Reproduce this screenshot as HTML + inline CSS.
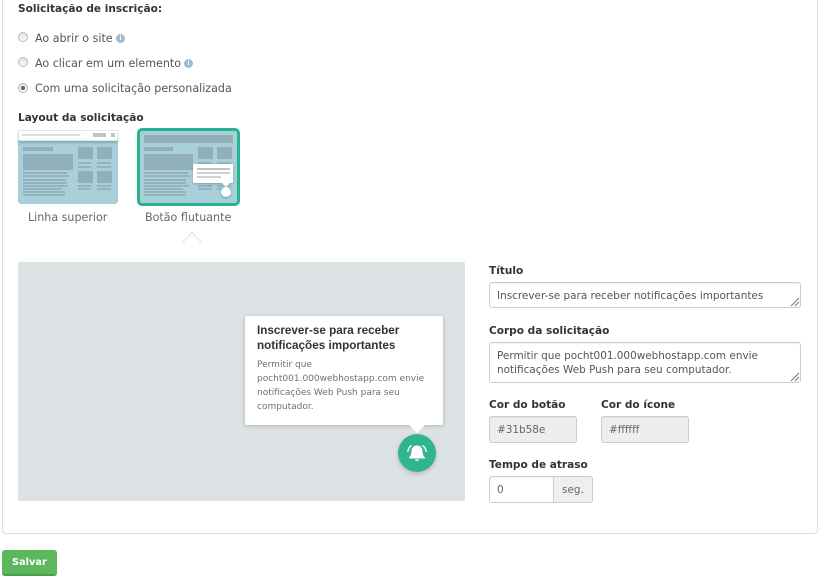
<!DOCTYPE html>
<html><head><meta charset="utf-8"><style>
html,body{margin:0;padding:0;background:#fff}
#p{position:relative;width:818px;height:583px;overflow:hidden;background:#fff;font-family:"DejaVu Sans","Liberation Sans",sans-serif;font-size:11.1px;color:#555}
#p *{box-sizing:border-box}
.a{position:absolute}
.t{position:absolute;white-space:nowrap;line-height:14px}
.b{font-weight:bold;color:#333;font-size:10.55px}
.in{position:absolute;border:1px solid #ccc;border-radius:3px;background:#fff;box-shadow:inset 0 1px 1px rgba(0,0,0,.05)}
.dis{background:#eee}
.radio{position:absolute;width:10px;height:10px;border-radius:50%;border:1px solid #bbb;background:linear-gradient(#e2e2e2,#f8f8f8);left:18px}
.i{position:absolute;width:9px;height:9px;border-radius:50%;background:#9dbccf;color:#fff;font:bold 7px/9px "Liberation Serif",serif;text-align:center}
.th{background:#a9cfda;position:absolute}
.r{position:absolute;background:#91b0ba}
.l{position:absolute;background:#93b3bd;height:2px}
.f{font-size:10.45px}
</style></head><body><div id="p">
<div class="a" style="left:2px;top:-10px;width:816px;height:544px;border:1px solid #ddd;border-radius:4px"></div>

<div class="t b" style="left:18px;top:2px">Solicitação de inscrição:</div>
<div class="radio" style="top:32px"></div>
<div class="t" style="left:35px;top:32px">Ao abrir o site</div>
<div class="i" style="left:116px;top:34px">i</div>
<div class="radio" style="top:57px"></div>
<div class="t" style="left:35px;top:57px">Ao clicar em um elemento</div>
<div class="i" style="left:184px;top:59px">i</div>
<div class="radio" style="top:83px"></div>
<div class="a" style="left:21px;top:86px;width:4px;height:4px;border-radius:50%;background:#666"></div>
<div class="t" style="left:35px;top:82px">Com uma solicitação personalizada</div>
<div class="t b" style="left:18px;top:111px">Layout da solicitação</div>

<!-- thumb 1 -->
<div class="th" style="left:18px;top:130px;width:100px;height:74px;border-radius:3px"></div>
<div class="a" style="left:18px;top:130px;width:100px;height:11px;background:#fff;border:1px solid #dfe9ec;border-radius:2px;box-shadow:0 2px 2px rgba(60,90,100,.3)"></div>
<div class="a" style="left:22px;top:134px;width:58px;height:2px;background:#ddd"></div>
<div class="a" style="left:93px;top:133px;width:13px;height:4px;background:#c4c4c4"></div>
<div class="a" style="left:111px;top:133px;width:4px;height:4px;background:#c4c4c4"></div>
<div class="r" style="left:23px;top:147px;width:30px;height:4px"></div>
<div class="r" style="left:23px;top:154px;width:50px;height:16px"></div>
<div class="l" style="left:23px;top:172px;width:44px"></div>
<div class="l" style="left:23px;top:175px;width:46px"></div>
<div class="l" style="left:23px;top:179px;width:43px"></div>
<div class="l" style="left:23px;top:182px;width:44px"></div>
<div class="l" style="left:23px;top:185px;width:45px"></div>
<div class="l" style="left:23px;top:188px;width:39px"></div>
<div class="l" style="left:23px;top:191px;width:42px"></div>
<div class="l" style="left:23px;top:194px;width:42px"></div>
<div class="r" style="left:78px;top:147px;width:15px;height:12px"></div>
<div class="r" style="left:97px;top:147px;width:15px;height:12px"></div>
<div class="l" style="left:78px;top:162px;width:13px"></div><div class="l" style="left:97px;top:162px;width:14px"></div>
<div class="l" style="left:78px;top:166px;width:13px"></div><div class="l" style="left:97px;top:166px;width:14px"></div>
<div class="r" style="left:78px;top:171px;width:15px;height:12px"></div>
<div class="r" style="left:97px;top:171px;width:15px;height:12px"></div>
<div class="l" style="left:78px;top:185px;width:13px"></div><div class="l" style="left:97px;top:185px;width:14px"></div>
<div class="l" style="left:78px;top:188px;width:13px"></div><div class="l" style="left:97px;top:188px;width:14px"></div>
<div class="t" style="left:28px;top:211px;color:#666">Linha superior</div>

<!-- thumb 2 -->
<div class="th" style="left:137px;top:128px;width:103px;height:78px;border:3px solid #26b48e;border-radius:5px"></div>
<div class="r" style="left:144px;top:135px;width:89px;height:8px"></div>
<div class="r" style="left:144px;top:147px;width:29px;height:4px"></div>
<div class="r" style="left:144px;top:154px;width:49px;height:16px"></div>
<div class="l" style="left:144px;top:172px;width:44px"></div>
<div class="l" style="left:144px;top:175px;width:46px"></div>
<div class="l" style="left:144px;top:179px;width:42px"></div>
<div class="l" style="left:144px;top:182px;width:42px"></div>
<div class="l" style="left:144px;top:185px;width:45px"></div>
<div class="l" style="left:144px;top:188px;width:39px"></div>
<div class="l" style="left:144px;top:191px;width:42px"></div>
<div class="l" style="left:144px;top:194px;width:42px"></div>
<div class="r" style="left:198px;top:147px;width:15px;height:12px"></div>
<div class="r" style="left:217px;top:147px;width:15px;height:12px"></div>
<div class="l" style="left:198px;top:162px;width:14px"></div><div class="l" style="left:217px;top:162px;width:14px"></div>
<div class="l" style="left:198px;top:185px;width:14px"></div><div class="l" style="left:217px;top:185px;width:14px"></div>
<div class="l" style="left:198px;top:188px;width:14px"></div><div class="l" style="left:217px;top:188px;width:14px"></div>
<div class="a" style="left:193px;top:164px;width:40px;height:19px;background:#fff;box-shadow:0 1px 2px rgba(60,90,100,.4)"></div>
<div class="a" style="left:197px;top:168px;width:33px;height:2px;background:#c2c2c2"></div>
<div class="a" style="left:197px;top:172px;width:33px;height:2px;background:#d2d2d2"></div>
<div class="a" style="left:197px;top:176px;width:24px;height:2px;background:#d2d2d2"></div>
<svg class="a" style="left:222px;top:183px" width="8" height="4"><path d="M0 0H8L4 4Z" fill="#fff"/></svg>
<div class="a" style="left:221px;top:187px;width:10px;height:10px;border-radius:50%;background:#fff;box-shadow:0 1px 2px rgba(60,90,100,.5)"></div>
<div class="t" style="left:145px;top:211px;color:#666">Botão flutuante</div>
<svg class="a" style="left:182px;top:231px" width="20" height="12"><path d="M0.5 11.500L10 1.500L19.500 11.500" fill="none" stroke="#e2e2e2"/></svg>

<!-- preview -->
<div class="a" style="left:18px;top:262px;width:447px;height:239px;background:#dce1e3;border-radius:2px"></div>
<div class="a" style="left:245px;top:316px;width:198px;height:109px;background:#fff;border-radius:2px;box-shadow:0 1px 4px rgba(0,0,0,.2)"></div>
<div class="t" style="left:257px;top:324px;font-size:11.700px;font-weight:bold;color:#333;font-family:'Liberation Sans',sans-serif">Inscrever-se para receber</div>
<div class="t" style="left:257px;top:339px;font-size:11.700px;font-weight:bold;color:#333;font-family:'Liberation Sans',sans-serif">notificações importantes</div>
<div class="t" style="left:257px;top:358px;font-size:9px;color:#707070">Permitir que</div>
<div class="t" style="left:257px;top:372px;font-size:9px;color:#707070">pocht001.000webhostapp.com envie</div>
<div class="t" style="left:257px;top:386px;font-size:9px;color:#707070">notificações Web Push para seu</div>
<div class="t" style="left:257px;top:400px;font-size:9px;color:#707070">computador.</div>
<svg class="a" style="left:409px;top:425px" width="16" height="8"><path d="M0 0H16L8 8Z" fill="#fff"/></svg>
<div class="a" style="left:398px;top:434px;width:38px;height:38px;border-radius:50%;background:#31b58e;box-shadow:0 2px 4px rgba(0,0,0,.18)"></div>
<svg class="a" style="left:405px;top:441px" width="24" height="24" viewBox="0 0 24 24"><path d="M12 4.500c-3.400 0-5.300 2.300-5.500 5.500-.2 3.400-1 5-2.300 6.200-.5.500-.3 1.300.4 1.300h14.800c.7 0 .9-.8.4-1.300C18.500 15 17.700 13.400 17.500 10c-.2-3.200-2.100-5.500-5.500-5.500z" fill="#fff"/><path d="M10 18.500h4a2 1.500 0 0 1-4 0z" fill="#fff"/><path d="M2.800 11C3 8.300 4.300 6 6.500 4.300M21.200 11C21 8.300 19.700 6 17.500 4.300" fill="none" stroke="#fff" stroke-width="1.300"/></svg>

<!-- form -->
<div class="t b" style="left:489px;top:264px">Título</div>
<div class="in" style="left:489px;top:282px;width:312px;height:26px"></div>
<div class="t f" style="left:497px;top:289px">Inscrever-se para receber notificações importantes</div>
<svg class="a" style="left:790px;top:297px" width="10" height="10"><path d="M1 9L9 1M5 9L9 5" stroke="#777" stroke-width="1" fill="none"/></svg>
<div class="t b" style="left:489px;top:324px">Corpo da solicitação</div>
<div class="in" style="left:489px;top:342px;width:312px;height:41px"></div>
<div class="t f" style="left:497px;top:349px">Permitir que pocht001.000webhostapp.com envie</div>
<div class="t f" style="left:497px;top:363px">notificações Web Push para seu computador.</div>
<svg class="a" style="left:790px;top:372px" width="10" height="10"><path d="M1 9L9 1M5 9L9 5" stroke="#777" stroke-width="1" fill="none"/></svg>
<div class="t b" style="left:489px;top:398px">Cor do botão</div>
<div class="t b" style="left:601px;top:398px">Cor do ícone</div>
<div class="in dis" style="left:489px;top:416px;width:88px;height:27px"></div>
<div class="t f" style="left:497px;top:423px;color:#666">#31b58e</div>
<div class="in dis" style="left:601px;top:416px;width:88px;height:27px"></div>
<div class="t f" style="left:609px;top:423px;color:#666">#ffffff</div>
<div class="t b" style="left:489px;top:458px">Tempo de atraso</div>
<div class="in" style="left:489px;top:476px;width:65px;height:27px;border-radius:3px 0 0 3px"></div>
<div class="t f" style="left:497px;top:483px;color:#666">0</div>
<div class="in" style="left:553px;top:476px;width:40px;height:27px;border-radius:0 3px 3px 0;box-shadow:none;background:#efefef"></div>
<div class="t f" style="left:562px;top:483px;color:#666">seg.</div>

<div class="a" style="left:2px;top:550px;width:55px;height:26px;background:#5cb85c;border-bottom:2px solid #4aa04a;border-radius:3px"></div>
<div class="t" style="left:12px;top:556px;font-size:9.800px;font-weight:bold;color:#fff">Salvar</div>
</div></body></html>
